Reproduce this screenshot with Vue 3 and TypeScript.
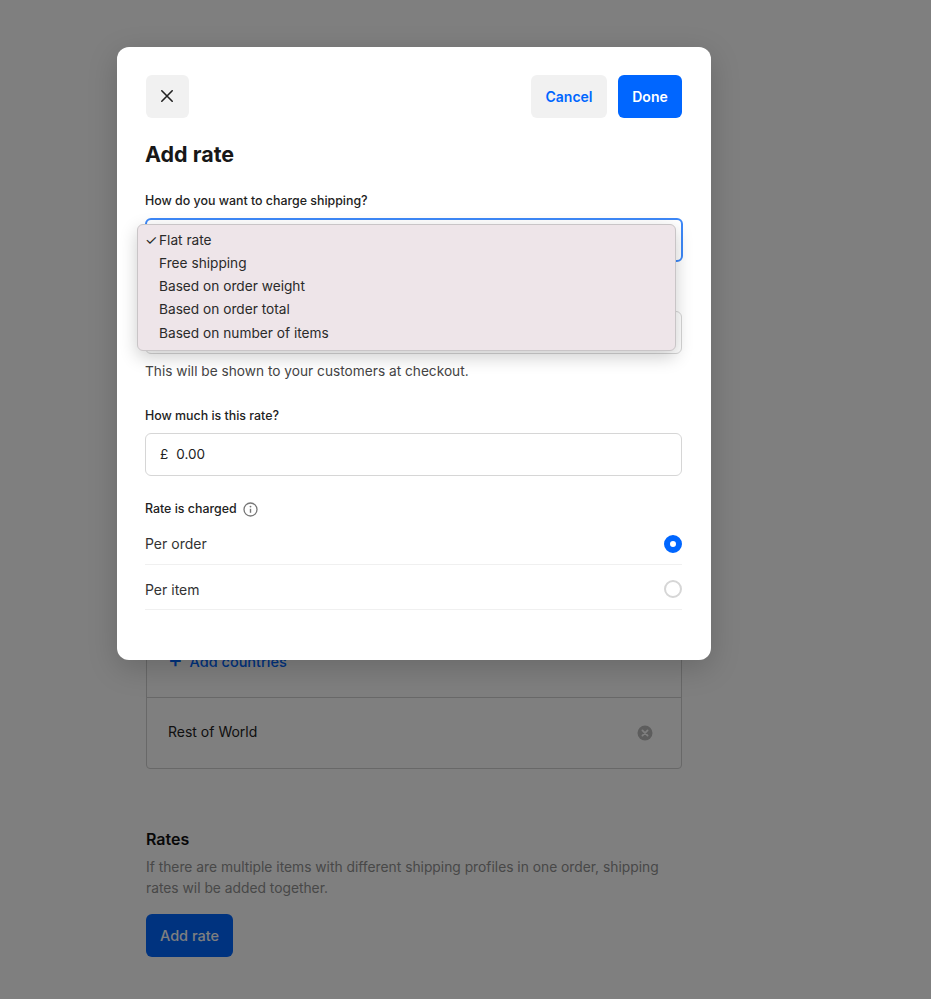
<template>
  <div class="page">
    <div class="zones">
      <div class="zone add-zone">
        <a class="add-link"><span class="plus">+</span> Add countries</a>
      </div>
      <div class="zone rest-zone">
        <span class="rest-name">Rest of World</span>
        <svg class="remove" width="16" height="16" viewBox="0 0 16 16">
          <circle cx="8" cy="8" r="7.5" fill="#bbb" />
          <path d="M5.4 5.4l5.2 5.2M10.6 5.4l-5.2 5.2" stroke="#fff" stroke-width="1.7" stroke-linecap="round" />
        </svg>
      </div>
    </div>
    <h2 class="rates-title">Rates</h2>
    <p class="rates-text">
      If there are multiple items with different shipping profiles in one order, shipping rates wil be added together.
    </p>
    <button class="add-rate">Add rate</button>

    <div class="overlay">
      <div class="modal">
        <div class="modal-head">
          <button class="btn btn-close" aria-label="Close">
            <svg width="14" height="14" viewBox="0 0 14 14">
              <path d="M1.8 1.8l10.4 10.4M12.2 1.8L1.8 12.2" stroke="#222" stroke-width="1.6" stroke-linecap="round" />
            </svg>
          </button>
          <div class="head-actions">
            <button class="btn btn-cancel">Cancel</button>
            <button class="btn btn-done">Done</button>
          </div>
        </div>

        <h1 class="modal-title">Add rate</h1>

        <label class="label">How do you want to charge shipping?</label>
        <div class="select-wrap">
          <div class="field field-focus"></div>
          <ul class="menu">
            <li v-for="(option, index) in chargeOptions" :key="option">
              <span class="tick">{{ index === 0 ? "✓" : "" }}</span>{{ option }}
            </li>
          </ul>
        </div>

        <div class="field field-name"></div>
        <p class="help">This will be shown to your customers at checkout.</p>

        <label class="label label-rate">How much is this rate?</label>
        <div class="field field-price"><span class="currency">£</span>0.00</div>

        <div class="label label-charged">
          Rate is charged
          <svg width="15" height="15" viewBox="0 0 15 15">
            <circle cx="7.5" cy="7.5" r="6.5" fill="none" stroke="#777" stroke-width="1.3" />
            <path d="M7.5 6.8v4" stroke="#777" stroke-width="1.4" />
            <circle cx="7.5" cy="4.6" r=".9" fill="#777" />
          </svg>
        </div>
        <div class="radio-row" v-for="row in chargeRows" :key="row.label">
          <span>{{ row.label }}</span>
          <span class="radio" :class="{ checked: row.checked }"></span>
        </div>
      </div>
    </div>
  </div>
</template>

<script setup lang="ts">
interface ChargeRow {
  label: string;
  checked: boolean;
}

const chargeOptions: string[] = [
  "Flat rate",
  "Free shipping",
  "Based on order weight",
  "Based on order total",
  "Based on number of items",
];

const chargeRows: ChargeRow[] = [
  { label: "Per order", checked: true },
  { label: "Per item", checked: false },
];
</script>

<style>
html,
body {
  margin: 0;
  background: #fff;
}
</style>

<style scoped>
.page {
  position: relative;
  height: 999px;
  overflow: hidden;
  box-sizing: border-box;
  padding: 600px 249px 0 146px;
  font-family: Inter, "Liberation Sans", sans-serif;
  font-size: 14px;
  color: #222;
}

.zones {
  border: 1px solid #d0d0d0;
  border-radius: 4px;
}

.zone {
  display: flex;
  align-items: center;
  justify-content: space-between;
  padding: 0 28px 0 21px;
}

.add-zone {
  height: 97px;
  border-bottom: 1px solid #d0d0d0;
  align-items: flex-end;
  padding-bottom: 27px;
  box-sizing: border-box;
}

.add-link {
  color: #06f;
  font-size: 14.5px;
  font-weight: 500;
}

.plus {
  font-size: 22px;
  line-height: 14px;
  margin-right: 3px;
}

.rest-zone {
  height: 70px;
}

.rest-name {
  margin-bottom: 3px;
}

.rates-title {
  margin: 60px 0 0;
  font-size: 16px;
  line-height: 20px;
  font-weight: 600;
  color: #111;
}

.rates-text {
  margin: 8px 0 0;
  font-size: 13.8px;
  line-height: 21px;
  color: #909090;
}

.add-rate {
  display: block;
  margin-top: 15px;
  width: 87px;
  height: 43px;
  border: none;
  border-radius: 6px;
  padding: 0;
  background: #06f;
  color: #fff;
  font: 500 14.5px Inter, "Liberation Sans", sans-serif;
}

.overlay {
  position: absolute;
  inset: 0;
  background: rgba(0, 0, 0, 0.5);
}

.modal {
  position: absolute;
  left: 117px;
  top: 47px;
  width: 594px;
  height: 613px;
  box-sizing: border-box;
  padding: 28px 29px 0 28px;
  background: #fff;
  border-radius: 12px;
  box-shadow: 0 8px 30px rgba(0, 0, 0, 0.18);
}

.modal-head {
  display: flex;
  justify-content: space-between;
}

.head-actions {
  display: flex;
  gap: 11px;
}

.btn {
  height: 43px;
  border: none;
  border-radius: 6px;
  padding: 0;
  background: #f1f1f1;
  font: 600 14px Inter, "Liberation Sans", sans-serif;
}

.btn-close {
  width: 43px;
  margin-left: 1px;
  display: flex;
  align-items: center;
  justify-content: center;
}

.btn-close svg {
  margin: 0 1px 1px 0;
}

.btn-cancel {
  width: 76px;
  color: #06f;
}

.btn-done {
  width: 64px;
  background: #06f;
  color: #fff;
}

.modal-title {
  margin: 22px 0 0;
  font-size: 21.5px;
  line-height: 28px;
  font-weight: 700;
  color: #171717;
}

.label {
  display: flex;
  align-items: center;
  gap: 6px;
  font-size: 12.4px;
  line-height: 16px;
  font-weight: 500;
  color: #222;
}

.modal-title + .label {
  margin-top: 25px;
}

.select-wrap {
  position: relative;
  margin-top: 9px;
}

.field {
  box-sizing: border-box;
  height: 43px;
  border: 1px solid #d6d6d6;
  border-radius: 6px;
  background: #fff;
}

.field-focus {
  width: 538px;
  height: 44px;
  border: 2px solid #3d88f8;
}

.menu {
  position: absolute;
  left: -8px;
  top: 6px;
  width: 539px;
  height: 127px;
  box-sizing: border-box;
  margin: 0;
  padding: 3px 0 0;
  list-style: none;
  background: #eee5e9;
  border: 1px solid #c9c5c7;
  border-radius: 6px;
  box-shadow: 0 6px 18px rgba(0, 0, 0, 0.2);
  color: #2a2a2a;
}

.menu li {
  display: flex;
  height: 23.25px;
  align-items: center;
  font-size: 13.7px;
}

.tick {
  width: 21px;
  box-sizing: border-box;
  padding-left: 7px;
  font-size: 14px;
  flex-shrink: 0;
}

.field-name {
  width: 537px;
  margin-top: 49px;
}

.help {
  margin: 8px 0 0;
  font-size: 13.7px;
  line-height: 18px;
  color: #444;
}

.label-rate {
  margin-top: 28px;
}

.field-price {
  width: 537px;
  margin-top: 9px;
  display: flex;
  align-items: center;
  padding-left: 14px;
  padding-bottom: 2px;
  font-size: 13.5px;
  color: #222;
}

.currency {
  margin-right: 8px;
}

.label-charged {
  margin-top: 25px;
  margin-bottom: 2px;
}

.radio-row {
  display: flex;
  align-items: center;
  justify-content: space-between;
  width: 537px;
  height: 45.5px;
  box-sizing: border-box;
  padding-top: 5px;
  border-bottom: 1px solid #f0f0f0;
  color: #333;
}

.radio {
  box-sizing: border-box;
  width: 18px;
  height: 18px;
  border-radius: 50%;
  border: 2px solid #d6d6d6;
}

.radio.checked {
  border: 6px solid #06f;
  background: #fff;
}
</style>
